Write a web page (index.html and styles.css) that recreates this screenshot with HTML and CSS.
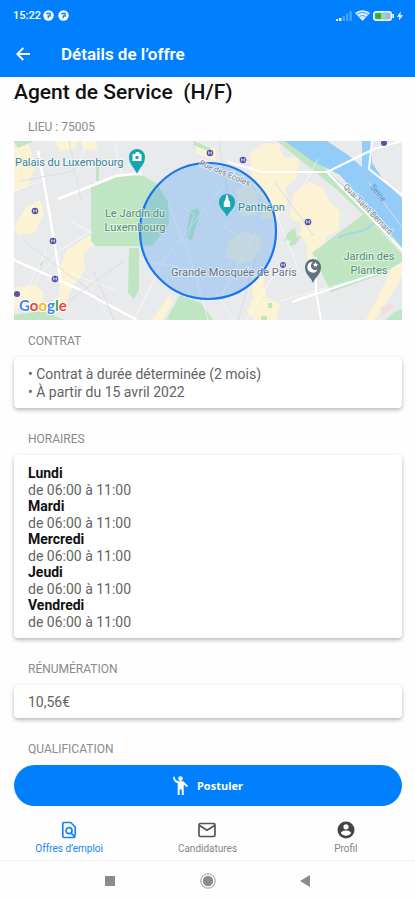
FILE: index.html
```html
<!DOCTYPE html>
<html lang="fr">
<head>
    <meta charset="UTF-8">
    <meta name="viewport" content="width=device-width, initial-scale=1.0">
    <title>Détails de l’offre</title>
    <link rel="stylesheet" href="styles.css">
</head>
<body>
    <div class="app">
        <header class="header">
            <div class="status-bar">
                <div class="status-left">
                    <span>15:22</span>
                    <svg width="11" height="11" viewBox="0 0 11 11">
                        <circle cx="5.5" cy="5.5" r="5.2" fill="#fff"/>
                        <path d="M3.200 3.500h4v2.500H5.200v2.200" fill="none" stroke="#0080ff" stroke-width="1.300"/>
                    </svg>
                    <svg class="status-gap" width="11" height="11" viewBox="0 0 11 11">
                        <circle cx="5.5" cy="5.5" r="5.2" fill="#fff"/>
                        <path d="M3.200 3.500h4v2.500H5.200v2.200" fill="none" stroke="#0080ff" stroke-width="1.300"/>
                    </svg>
                </div>
                <div class="status-right">
                    <svg width="16" height="10" viewBox="0 0 16 10">
                        <path d="M0 8h2v2H0zM3 7h2.4v3H3z" fill="#fff"/>
                        <path d="M6.5 5H9v5H6.5zM10 2.5h2.4V10H10zM13.3 0H16v10h-2.7z" fill="#fff" opacity=".25"/>
                    </svg>
                    <svg width="15" height="11" viewBox="0 0 15 11">
                        <path d="M7.500 11 0 3C4.300-.6 10.700-.6 15 3z" fill="#fff" opacity=".85"/>
                        <path d="M2 4.500c3.300-2.600 7.700-2.600 11 0M4.300 6.700c2-1.500 4.400-1.500 6.400 0" fill="none" stroke="#0080ff" stroke-width=".7"/>
                    </svg>
                    <svg width="21" height="10" viewBox="0 0 21 10">
                        <rect x=".7" y=".7" width="17.600" height="8.600" rx="2.500" fill="#8ebcf0" stroke="#fff" stroke-width="1.400"/>
                        <path d="M2.300 2.200h6v5.600h-6z" fill="#25b52b"/>
                        <path d="M8.300 2.200h4v5.600h-4z" fill="#a9d5a0"/>
                        <path d="M19.300 3H21v4h-1.700z" fill="#fff"/>
                    </svg>
                    <svg width="6" height="10" viewBox="0 0 6 10">
                        <path d="M3.800.5 0 5.700h2.400L1.800 9.500 6 4.200H3.300z" fill="#fff"/>
                    </svg>
                </div>
            </div>
            <div class="app-bar">
                <button class="back" aria-label="Retour">
                    <svg width="14" height="14" viewBox="0 0 14 14" fill="none" stroke="#fff" stroke-width="1.800">
                        <path d="M14 7H1.500M7.300 1 1.300 7l6 6"/>
                    </svg>
                </button>
                <div class="app-title">Détails de l’offre</div>
            </div>
        </header>

        <main class="content">
            <h1 class="job-title">Agent de Service&nbsp; (H/F)</h1>

            <h2 class="label first">LIEU : 75005</h2>
            <svg class="map" viewBox="0 0 388 179" role="img" aria-label="Carte">
                <rect width="388" height="179" fill="#e9eaec"/>
                <!-- built-up areas -->
                <g fill="#fbf3d3">
                    <path d="M0 6 14 2l8 22-9 22-13 5zM40 0h25l-5 8-14 2zM67 0h15l2 8-13 2zM0 87l12-21 14-7 4 14-9 18-17 4zM43 134l9-24 26-17 3 9-12 12 2 15-16 22-2 16-10-3 3-18zM0 147l20-3 10 7-3 16-14-3-13 5zM156 153l-6 9-12 17h10l11-18zM182 0l20 8v12l-20-8z"/>
                    <path d="m236 12 14-10 15 1 4 13 16 1-2 20-12 10 3 14-12 18-15-2 3-17-12-17zM279 53l17-12 14 6 6 14 10 9-1 19-12 6-3 10-10 4 1 18-7-2-1-22-8-9 3-11-13-6zM236 134l13-1 3 23 14 7-4 16h-20l-9-8 6-16zM388 121l-10 5-13 28-8 15-5 10h9l12-18 15-26z"/>
                    <path d="m222 50 14-8 8 12-2 20-14 2zM215 100l14-10 18 6-2 20-16 6-18-6z" opacity=".8"/>
                </g>
                <path d="m366 167 12-5 1 5-11 7z" fill="#f4dcd9"/>
                <!-- parks -->
                <g fill="#bfe5c3">
                    <path d="M77 43l30-9 23 1 13 8 11 18 1 22-16 21-9 1H82l-5-5zM115 107h10v42l-5 9-6-6z"/>
                    <path d="m298 112 52-39 38 40v8l-22 13-49 17z"/>
                    <path d="m166 154 21 8 12 17h-47zM0 0h20L4 7zM82 25h3v15h-3zM26 123l4-4-3 7zM180 0l17 7-2 3-16-6zM380 171l8-3v11h-16zM273 93l8-6 2 10 5-3-7 10-6 1 2-6-7 1zM254 162h4v5h-4zM247 175h6v4h-6zM0 174l30-4 20 9H0zM176 70l8-3 2 5-8 27-6-2z"/>
                </g>
                <!-- river -->
                <path d="M263 0h18l107 98v12l-67-63z" fill="#bfe5c3"/>
                <path d="M271 0h42l21 14 14 12V0h10v22l13 19 17 16v49l-62-72-28-14z" fill="#93cdf7"/>
                <path d="M324 97c12-8 25-2 35-15" fill="none" stroke="#a4d5eb" stroke-width="2"/>
                <!-- streets -->
                <g fill="none" stroke="#fff">
                    <path d="M24 10l10 54 13 78M0 119l69 31 54 29M44 58l58-23 26-3" stroke-width="2.500"/>
                    <path d="M313 31h-65l-34-10M313 31l75 78M313 31l47-23 28-8M358 0l-3 28 33 26M302 116v36l-24 9 86-29M302 151l5 28" stroke-width="2"/>
                    <path d="M20 65 0 82M20 142l25-32 32-20M50 130l54 20M72 0 60 42M100 0l8 35M120 179l30-60 60-75M154 62l24 60 16 57M200 150l20 29M242 90l-35 65M262 130l-30 49M255 55l30 75M304 18l-15 28M56 80l22 12M72 142l25 37M210 85l28 22M0 50l27-10M130 120l60 10M266 160l70-20M2 170l30-60" stroke-width="1" opacity=".6"/>
                    <path d="M168 66l12 7-8 28" stroke-width="1" opacity=".6"/>
                </g>
                <g stroke="#dcdee4" stroke-width="1" fill="none">
                    <path d="M6 40 60 30M10 100l80 60M55 0l12 60M40 170l70-50M205 0l10 60M260 40l40 55M355 42l33 44M80 130l20 49M244 110l-20 69"/>
                </g>
                <!-- metro stations -->
                <g fill="#5952a5">
                    <circle cx="21" cy="70" r="3.300"/><circle cx="39" cy="100" r="3.300"/>
                    <circle cx="41" cy="138" r="3.300"/><circle cx="3" cy="153" r="3"/>
                    <circle cx="196" cy="12" r="3.300"/><circle cx="229" cy="19" r="3.300"/>
                    <circle cx="294" cy="81" r="3.300"/><circle cx="269" cy="124" r="3"/>
                    <circle cx="370" cy="2" r="3"/>
                </g>
                <g fill="none" stroke="#d5d2f0" stroke-width=".8">
                    <path d="M19.500 71.500v-3l1.500 2 1.500-2v3M37.500 101.500v-3l1.500 2 1.500-2v3M39.500 139.500v-3l1.500 2 1.500-2v3M194.500 13.500v-3l1.500 2 1.500-2v3M227.500 20.500v-3l1.500 2 1.500-2v3M292.500 82.500v-3l1.500 2 1.500-2v3M267.500 125.500v-3l1.500 2 1.500-2v3"/>
                </g>
                <!-- search radius -->
                <circle cx="194" cy="90" r="68" fill="#1a85f5" fill-opacity=".24" stroke="#1877ef" stroke-width="2.200"/>
                <!-- pins -->
                <path d="M123 33c-2-6-8-9-8-17a8 8 0 0 1 16 0c0 8-6 11-8 17z" fill="#16a6b1"/>
                <path d="M118.500 13h2.500l1-2h3l1 2h1.500v7h-9z" fill="#fff"/><circle cx="123" cy="16.500" r="1.700" fill="#16a6b1"/>
                <path d="M213 76c-2-6-8-8-8-15a8 8 0 0 1 16 0c0 7-6 9-8 15z" fill="#16a6b1"/>
                <path d="M212.300 54h1.400l1 5 1.500 2v5h-6.400v-5l1.500-2z" fill="#fff"/>
                <path d="M299 142c-2-6-8-8-8-16a8 8 0 0 1 16 0c0 8-6 10-8 16z" fill="#60737f"/>
                <path d="M299 121a5.300 5.300 0 1 0 4.500 7.500A4.300 4.300 0 0 1 299 121z" fill="#fff"/><path d="m301.500 121 .8 1.700 1.900.2-1.400 1.300.4 1.900-1.700-1-1.700 1 .4-1.900-1.300-1.300 1.900-.2z" fill="#fff"/>
                <!-- place names -->
                <g class="map-text">
                    <text x="1" y="25" fill="#34869a">Palais du Luxembourg</text>
                    <text x="121" y="76" text-anchor="middle" fill="#4f8f6c">Le Jardin du</text>
                    <text x="121" y="90" text-anchor="middle" fill="#4f8f6c">Luxembourg</text>
                    <text x="224" y="70" fill="#34869a">Panthéon</text>
                    <text x="157" y="135" fill="#667485">Grande Mosquée de Paris</text>
                    <text x="355" y="119" text-anchor="middle" fill="#4f8f6c">Jardin des</text>
                    <text x="355" y="133" text-anchor="middle" fill="#4f8f6c">Plantes</text>
                </g>
                <g class="map-street">
                    <text transform="translate(185 24) rotate(23)">Rue des Écoles</text>
                    <text transform="translate(329 46) rotate(46)">Quai Saint-Bernard</text>
                    <text class="map-river" transform="translate(356 46) rotate(52)">Seine</text>
                </g>
                <text class="google" x="5" y="170"><tspan fill="#4285f4">G</tspan><tspan fill="#ea4335">o</tspan><tspan fill="#fbbc05">o</tspan><tspan fill="#4285f4">g</tspan><tspan fill="#34a853">l</tspan><tspan fill="#ea4335">e</tspan></text>
            </svg>

            <h2 class="label">CONTRAT</h2>
            <div class="card">
                <div>• Contrat à durée déterminée (2 mois)</div>
                <div>• À partir du 15 avril 2022</div>
            </div>

            <h2 class="label">HORAIRES</h2>
            <dl class="card hours">
                <dt>Lundi</dt>
                <dd>de 06:00 à 11:00</dd>
                <dt>Mardi</dt>
                <dd>de 06:00 à 11:00</dd>
                <dt>Mercredi</dt>
                <dd>de 06:00 à 11:00</dd>
                <dt>Jeudi</dt>
                <dd>de 06:00 à 11:00</dd>
                <dt>Vendredi</dt>
                <dd>de 06:00 à 11:00</dd>
            </dl>

            <h2 class="label">RÉNUMÉRATION</h2>
            <div class="card">10,56€</div>

            <h2 class="label">QUALIFICATION</h2>
        </main>

        <footer class="footer">
            <button class="apply">
                <svg width="15" height="19" viewBox="0 0 15 19" fill="#fff">
                    <circle cx="7.500" cy="2.600" r="2.300"/>
                    <path d="M0 1.200 1.600.6C2 3.500 3.500 5.200 6 5.300h3c1.200 0 1.900.4 2.600 1.200L15 10l-1.300 1.300-3-2.800V19H8.800v-5.500H6.600V19H4.700V7.200C2 6.300.3 4.500 0 1.200z"/>
                </svg>
                Postuler
            </button>
            <nav class="tabs">
                <a class="tab active" href="#">
                    <svg width="18" height="18" viewBox="0 0 18 18" fill="none" stroke="currentColor" stroke-width="1.700">
                        <path d="M15.200 14.500V6l-4.500-4.500H4.200c-.8 0-1.400.6-1.400 1.400v12.200c0 .8.600 1.400 1.400 1.400h9.600c.5 0 .9-.2 1.100-.6l-3.800-3.800"/>
                        <circle cx="9" cy="9.700" r="3"/>
                    </svg>
                    Offres d’emploi
                </a>
                <a class="tab" href="#">
                    <svg width="18" height="18" viewBox="0 0 18 18" fill="none" stroke="#555" stroke-width="1.700">
                        <rect x="1" y="2.500" width="16" height="13" rx="1.500"/>
                        <path d="m1.500 4.500 7.500 4.700 7.500-4.700"/>
                    </svg>
                    Candidatures
                </a>
                <a class="tab" href="#">
                    <svg width="18" height="18" viewBox="0 0 18 18">
                        <circle cx="9" cy="9" r="8.500" fill="#444"/>
                        <circle cx="9" cy="5.800" r="2.600" fill="#fff"/>
                        <path d="M3.900 12c0-1.700 3.400-2.600 5.100-2.600s5.100.9 5.100 2.600a6.100 6.100 0 0 1-10.200 0z" fill="#fff"/>
                    </svg>
                    Profil
                </a>
            </nav>
            <div class="system-nav">
                <button aria-label="Applications récentes">
                    <svg width="18" height="18" viewBox="0 0 18 18"><path d="M4 4h10v10H4z" fill="#8b8b8b"/></svg>
                </button>
                <button aria-label="Accueil">
                    <svg width="18" height="18" viewBox="0 0 18 18"><circle cx="9" cy="9" r="7.200" fill="none" stroke="#999" stroke-width="1"/><circle cx="9" cy="9" r="5.200" fill="#8b8b8b"/></svg>
                </button>
                <button aria-label="Précédent">
                    <svg width="18" height="18" viewBox="0 0 18 18"><path d="M13 3v12L3 9z" fill="#8b8b8b"/></svg>
                </button>
            </div>
        </footer>
    </div>
</body>
</html>
```

FILE: styles.css
```css
* {
    box-sizing: border-box;
}
body {
    font-family: Roboto, "Liberation Sans", sans-serif;
    background-color: #fefefe;
    color: #636363;
    margin: 0;
}
button {
    font-family: inherit;
    border: none;
    padding: 0;
    background: none;
    cursor: pointer;
}
svg {
    display: block;
}
.app {
    display: flex;
    flex-direction: column;
    height: 100vh;
}
.header {
    background-color: #0080ff;
    color: #fff;
}
.status-bar {
    display: flex;
    justify-content: space-between;
    align-items: center;
    height: 31px;
    padding: 0 12px 0 13px;
    font-size: 11px;
    font-weight: 500;
}
.status-left,
.status-right {
    display: flex;
    align-items: center;
    gap: 3px;
}
.status-left {
    gap: 2px;
}
.status-gap {
    margin-left: 2px;
}
.app-bar {
    display: flex;
    align-items: center;
    height: 46px;
    padding: 0 16px;
    gap: 31px;
}
.app-title {
    font-size: 17px;
    font-weight: 600;
}
.content {
    flex: 1;
    min-height: 0;
    overflow: hidden;
    padding: 0 13px 0 14px;
}
.job-title {
    margin: 0;
    font-size: 21px;
    line-height: 30px;
    font-weight: 500;
    color: #111;
}
.label {
    margin: 23px 14px 8px;
    font-size: 12px;
    line-height: 16px;
    font-weight: 400;
    color: #8a8a8a;
}
.label.first {
    margin: 12px 14px 6px;
}
.map {
    width: 100%;
}
.map + .label {
    margin-top: 13px;
}
.map-text {
    font-size: 11px;
    paint-order: stroke;
    stroke: #fff;
    stroke-opacity: 0.5;
    stroke-width: 2px;
}
.map-street {
    font-size: 8px;
    fill: #78808c;
    paint-order: stroke;
    stroke: #fff;
    stroke-opacity: 0.6;
    stroke-width: 2px;
}
.map-river {
    fill: #4d8fc4;
    stroke: none;
}
.google {
    font-family: Lato, sans-serif;
    font-size: 15px;
    font-weight: 700;
    paint-order: stroke;
    stroke: #fff;
    stroke-width: 2px;
}
.card {
    margin: 0;
    padding: 8px 14px 7px;
    font-size: 14px;
    line-height: 18px;
    border-radius: 4px;
    background-color: #fff;
    box-shadow: 0 2px 4px rgba(0, 0, 0, 0.28);
}
.hours {
    padding: 10px 14px 8px;
}
.hours dt {
    line-height: 17px;
    font-weight: 700;
    color: #111;
}
.hours dd {
    margin: 0;
    line-height: 16px;
}
.footer {
    padding-top: 8px;
}
.apply {
    display: flex;
    justify-content: center;
    align-items: center;
    gap: 9px;
    width: calc(100% - 27px);
    height: 41px;
    margin: 0 13px 0 14px;
    border-radius: 21px;
    background-color: #0080ff;
    color: #fff;
    font-family: "Noto Sans", sans-serif;
    font-size: 11px;
    font-weight: 700;
}
.tabs {
    display: flex;
    height: 55px;
    padding-top: 15px;
    border-bottom: 1px solid #f3f3f3;
}
.tab {
    flex: 1;
    display: flex;
    flex-direction: column;
    align-items: center;
    gap: 3px;
    font-size: 10px;
    line-height: 13px;
    color: #858585;
    text-decoration: none;
}
.tab.active {
    color: #1684f5;
}
.system-nav {
    display: flex;
    justify-content: center;
    align-items: center;
    gap: 80px;
    height: 39px;
}
```
